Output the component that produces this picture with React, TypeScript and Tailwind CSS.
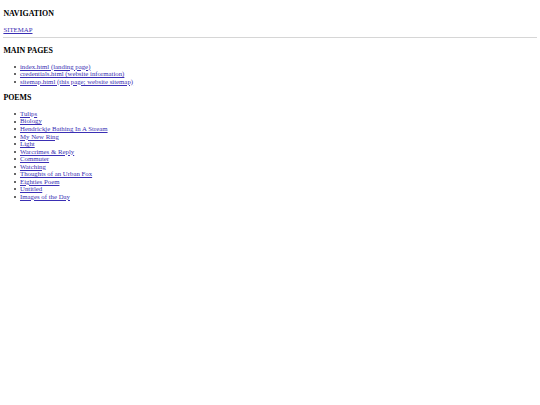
const mainPages = [
  { href: "index.html", label: "index.html (landing page)" },
  { href: "credentials.html", label: "credentials.html (website information)" },
  { href: "sitemap.html", label: "sitemap.html (this page; website sitemap)" },
];

const poems = [
  "Tulips",
  "Biology",
  "Hendrickje Bathing In A Stream",
  "My New Ring",
  "Light",
  "Warcrimes & Reply",
  "Commuter",
  "Watching",
  "Thoughts of an Urban Fox",
  "Eighties Poem",
  "Untitled",
  "Images of the Day",
];

function Heading({ children }: { children: React.ReactNode }) {
  return <h3 className="my-[7.9px] text-[7.9px] leading-[9px] font-bold">{children}</h3>;
}

function LinkList({ items }: { items: { href: string; label: string }[] }) {
  return (
    <ul className="my-[6.7px] pl-[16.6px]">
      {items.map((item) => (
        <li
          key={item.label}
          className="relative before:absolute before:left-[-5.8px] before:top-[3.1px] before:size-[2px] before:rounded-full before:bg-[#333] before:content-['']"
        >
          <a href={item.href} className="text-[#3a2fb4] underline">
            {item.label}
          </a>
        </li>
      ))}
    </ul>
  );
}

export default function App() {
  return (
    <div className="min-h-[405px] bg-white px-[3.4px] py-px text-[6.8px] leading-[7.55px] text-black font-['Liberation_Serif','Times_New_Roman',serif]">
      <Heading>NAVIGATION</Heading>
      <a href="sitemap.html" className="text-[#3a2fb4] underline">
        SITEMAP
      </a>
      <hr className="my-[3.4px] border-t border-[#d6d6d6]" />

      <Heading>MAIN PAGES</Heading>
      <LinkList items={mainPages} />

      <Heading>POEMS</Heading>
      <LinkList items={poems.map((p) => ({ href: "#", label: p }))} />
    </div>
  );
}
